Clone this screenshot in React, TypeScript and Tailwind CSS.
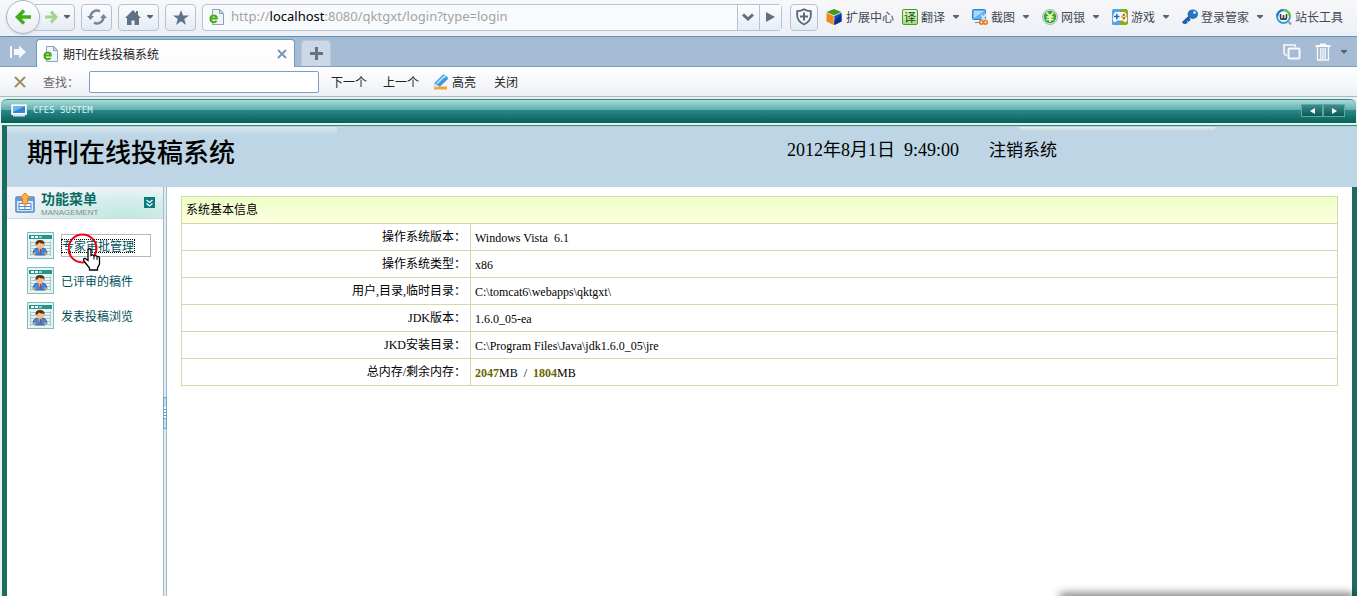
import type { ReactNode } from "react";

type Tool = {
  label: string;
  icon: ReactNode;
  menu: boolean;
};

type InfoRow = {
  label: string;
  value: ReactNode;
};

function Caret() {
  return (
    <svg width="6" height="4" viewBox="0 0 6 4" className="shrink-0" aria-hidden="true">
      <path d="M0 0h6v1L3.500 3.500h-1L0 1z" fill="#5a6470" />
    </svg>
  );
}

function PageIcon() {
  return (
    <svg width="16" height="16" viewBox="0 0 16 16" className="shrink-0" aria-hidden="true">
      <path d="M3.500.500h7.500l3.500 4v11h-11z" fill="#eef4fa" stroke="#8ba3bb" />
      <path d="M10.500.500v4h4z" fill="#c9d9e8" stroke="#8ba3bb" />
      <circle cx="4.800" cy="9.500" r="4.600" fill="#f4fbf0" />
      <path d="M2 9.500h5.800C7.800 5.200 1.500 5.500 1.500 9.700c0 4 4.500 4.300 6 2" fill="none" stroke="#43ac17" strokeWidth="2" />
    </svg>
  );
}

function CubeIcon() {
  return (
    <svg width="16" height="16" viewBox="0 0 16 16" aria-hidden="true">
      <path d="M8 0l7.500 3L8 6.300.500 3z" fill="#3d9b16" />
      <path d="M.500 3.800L7.700 7v9L.500 12.500z" fill="#f08a1c" />
      <path d="M15.500 3.800L8.300 7v9l7.200-3.500z" fill="#1550c0" />
      <path d="M8.300 12l7.200-7v7.500L8.300 16z" fill="#0c2f8c" />
    </svg>
  );
}

function TranslateIcon() {
  return (
    <span className="flex size-4 items-center justify-center rounded-xs border border-[#4b9b28] bg-linear-to-b from-[#e6f8d8] to-[#a6dc84] text-xs leading-none text-[#1e4a0c]">
      译
    </span>
  );
}

function ShotIcon() {
  return (
    <svg width="16" height="16" viewBox="0 0 16 16" aria-hidden="true">
      <rect x=".5" y=".5" width="13" height="10" rx="1" fill="#5db4f0" stroke="#3b7fc4" />
      <path d="M2 2h10L2 9z" fill="#a9dcfb" />
      <path d="M3 13h5v1H3z" fill="#6b8fb5" />
      <path d="M14.500 4.500L9.500 12M9.500 6l4 6" stroke="#dbe5ee" strokeWidth="1.800" />
      <circle cx="9.500" cy="13.300" r="1.800" fill="#fff" stroke="#e8771a" strokeWidth="1.600" />
      <circle cx="13.500" cy="13.300" r="1.800" fill="#fff" stroke="#e8771a" strokeWidth="1.600" />
    </svg>
  );
}

function BankIcon() {
  return (
    <svg width="16" height="16" viewBox="0 0 16 16" aria-hidden="true">
      <circle cx="8" cy="8" r="7.500" fill="#d3ecf3" stroke="#8fbccb" />
      <circle cx="8" cy="8" r="6.200" fill="#41a51d" />
      <path d="M4.500 3.500L8 7 11.500 3.500M8 7v6M4.500 8h7M4.500 10.500h7" fill="none" stroke="#f3ffd9" strokeWidth="1.600" />
    </svg>
  );
}

function GameIcon() {
  return (
    <svg width="16" height="16" viewBox="0 0 16 16" aria-hidden="true">
      <rect width="9" height="16" rx="1.500" fill="#57a5e3" />
      <path d="M8 0h6.500L16 1.500v13L14.500 16H8z" fill="#86ad1d" />
      <path d="M3.500 3h9Q15.500 5 15 12q-2 2.500-4-.500H5q-2 3-4 .500Q.500 5 3.500 3z" fill="#f6fbff" />
      <path d="M2 7.500h5.500M4.800 4.800v5.400" stroke="#2568b1" strokeWidth="1.500" />
      <path d="M9 6.500h2v2H9zM12.500 6.500h2v2h-2z" fill="#f2a51d" />
      <path d="M10.800 4.800h2v2h-2zM10.800 8.200h2v2h-2z" fill="#cf3720" />
    </svg>
  );
}

function KeyIcon() {
  return (
    <svg width="16" height="16" viewBox="0 0 16 16" aria-hidden="true">
      <path d="M9 6.500L1 14.200M3 12l1.500 2.500M5.500 9.500l2 2.500" stroke="#1d62a6" strokeWidth="3" />
      <ellipse cx="10.800" cy="5.200" rx="5.200" ry="4.800" fill="#2674bd" />
      <circle cx="12.500" cy="3.600" r="1.300" fill="#f4f6fa" />
    </svg>
  );
}

function WebmasterIcon() {
  return (
    <svg width="16" height="16" viewBox="0 0 16 16" aria-hidden="true">
      <circle cx="7.500" cy="7.500" r="6.400" fill="#fff" stroke="#22a7d4" strokeWidth="2" />
      <path d="M7.500 1.100a6.400 6.400 0 0 0-6.400 6.400" fill="none" stroke="#2c6fd2" strokeWidth="2" />
      <path d="M13.900 7.500A6.400 6.400 0 0 0 7.500 1.100" fill="none" stroke="#5fc72a" strokeWidth="2" />
      <path d="M4.500 5v3.200q0 2 1.500 2t1.500-2V6v2.200q0 2 1.500 2t1.500-2V5" fill="none" stroke="#333a44" strokeWidth="1.600" />
      <path d="M11.500 11.500L15 15.500" stroke="#949ca6" strokeWidth="2" />
    </svg>
  );
}

const tools: Tool[] = [
  { label: "翻译", icon: <TranslateIcon />, menu: true },
  { label: "截图", icon: <ShotIcon />, menu: true },
  { label: "网银", icon: <BankIcon />, menu: true },
  { label: "游戏", icon: <GameIcon />, menu: true },
  { label: "登录管家", icon: <KeyIcon />, menu: true },
  { label: "站长工具", icon: <WebmasterIcon />, menu: false },
];

const rows: InfoRow[] = [
  { label: "操作系统版本：", value: "Windows Vista  6.1" },
  { label: "操作系统类型：", value: "x86" },
  { label: "用户,目录,临时目录：", value: "C:\\tomcat6\\webapps\\qktgxt\\" },
  { label: "JDK版本：", value: "1.6.0_05-ea" },
  { label: "JKD安装目录：", value: "C:\\Program Files\\Java\\jdk1.6.0_05\\jre" },
  {
    label: "总内存/剩余内存：",
    value: (
      <>
        <b className="text-[#666600]">2047</b>MB{"  /  "}
        <b className="text-[#666600]">1804</b>MB
      </>
    ),
  },
];

const menuItems = ["专家审批管理", "已评审的稿件", "发表投稿浏览"];

const toolButton =
  "flex h-[27px] items-center justify-center rounded-sm border border-[#b3c3d3] bg-linear-to-b from-[#fbfcfe] to-[#e6ebf3]";

function Toolbar() {
  return (
    <header className="flex h-9 items-center bg-linear-to-b from-[#f8f8fa] to-[#eceff6] pr-3.5 pb-0.5 pl-1.5 text-xs text-[#444a52]">
      <button aria-label="后退" className="z-10 flex size-[34px] shrink-0 items-center justify-center rounded-full border border-[#a9b5c4] bg-linear-to-b from-white to-[#e9ecf3] shadow-sm">
        <svg width="16" height="16" viewBox="0 0 16 16" aria-hidden="true">
          <path d="M9 1.500L2.500 8 9 14.500M3 8h13" fill="none" stroke="#3fae1c" strokeWidth="3.500" />
        </svg>
      </button>
      <button aria-label="前进" className={`${toolButton} -ml-2 w-[43px] gap-1.5 pl-2`}>
        <svg width="13" height="14" viewBox="0 0 13 14" aria-hidden="true">
          <path d="M6 1.500L11 7l-5 5.500M0 7h11" fill="none" stroke="#9fd68e" strokeWidth="3" />
        </svg>
        <Caret />
      </button>
      <button aria-label="刷新" className={`${toolButton} ml-1.5 w-[31px]`}>
        <svg width="20" height="18" viewBox="0 0 20 18" aria-hidden="true">
          <path d="M3.500 9A6.500 6.500 0 0 1 13 3.300M16.500 9A6.500 6.500 0 0 1 7 14.700" fill="none" stroke="#76879b" strokeWidth="2.500" />
          <path d="M0 8h7l-3.500 4zM20 10h-7l3.500-4z" fill="#76879b" />
        </svg>
      </button>
      <button aria-label="主页" className={`${toolButton} ml-1.5 w-[41px] gap-1.5`}>
        <svg width="16" height="15" viewBox="0 0 16 15" aria-hidden="true">
          <path d="M8 0l3 3V1h2v4l3 3h-2v7H9.500v-4.500h-3V15H2V8H0z" fill="#5f7187" />
        </svg>
        <Caret />
      </button>
      <button aria-label="收藏" className={`${toolButton} ml-1.5 w-[31px]`}>
        <svg width="16" height="15" viewBox="0 0 16 15" aria-hidden="true">
          <path d="M8 0l2 5.500h6l-4.800 3.400L13 15 8 11.300 3 15l1.800-6.100L0 5.500h6z" fill="#5f7187" />
        </svg>
      </button>

      <div className="ml-1.5 flex h-[27px] min-w-0 flex-1 items-center rounded-sm border border-[#b3c3cf] bg-[#f9fafe]">
        <span className="pl-1.5">
          <PageIcon />
        </span>
        <a
          href="#"
          className="min-w-0 flex-1 truncate pl-1.5 font-['Noto_Sans',sans-serif] text-[13px] text-[#a3a3a3]"
        >
          http://<span className="text-black">localhost</span>:8080/qktgxt/login?type=login
        </a>
        <button aria-label="历史" className="flex h-full w-[22px] items-center justify-center border-l border-[#b3c3cf] bg-linear-to-b from-[#fbfcfe] to-[#e9edf4]">
          <svg width="12" height="8" viewBox="0 0 12 8" aria-hidden="true">
            <path d="M1 1.500l5 4.500 5-4.500" fill="none" stroke="#5f6f82" strokeWidth="3" />
          </svg>
        </button>
        <button aria-label="转到" className="flex h-full w-[22px] items-center justify-center border-l border-[#b3c3cf] bg-linear-to-b from-[#fbfcfe] to-[#e9edf4]">
          <svg width="9" height="10" viewBox="0 0 9 10" aria-hidden="true">
            <path d="M0 0l9 5-9 5z" fill="#5f7187" />
          </svg>
        </button>
      </div>

      <button aria-label="安全" className={`${toolButton} ml-2 w-7`}>
        <svg width="18" height="18" viewBox="0 0 18 18" aria-hidden="true">
          <path d="M9 1.300c2 1.400 4 1.800 6.800 1.800v4.400c0 4-2.800 7-6.800 9-4-2-6.800-5-6.800-9V3.100C5 3.100 7 2.700 9 1.300z" fill="#f5f7fa" stroke="#56677b" strokeWidth="1.800" />
          <path d="M9 4.500v8M5 8.500h8" stroke="#56677b" strokeWidth="2" />
        </svg>
      </button>
      <button className="mr-2 ml-2 flex shrink-0 items-center gap-1">
        <CubeIcon />
        扩展中心
      </button>
      <nav className="flex shrink-0 items-center gap-[13px]">
        {tools.map((tool) => (
          <button key={tool.label} className="flex items-center">
            {tool.icon}
            <span className="ml-[3px]">{tool.label}</span>
            {tool.menu && (
              <span className="ml-2">
                <Caret />
              </span>
            )}
          </button>
        ))}
      </nav>
    </header>
  );
}

function TabStrip() {
  return (
    <div className="flex h-[31px] items-end border-y border-t-[#6391b5] border-b-[#7d9fbe] bg-[#a6bbd4]">
      <button aria-label="侧栏" className="flex h-full w-9 items-center justify-center">
        <svg width="17" height="14" viewBox="0 0 17 14" aria-hidden="true">
          <path d="M1 1v12" stroke="#f5f8fc" strokeWidth="2" />
          <path d="M4 4h5V.500L16 7l-7 6.500V10H4z" fill="#f5f8fc" />
        </svg>
      </button>
      <div className="-mb-px flex h-7 w-[259px] items-center rounded-t-sm border border-b-0 border-[#6d9abf] bg-linear-to-b from-white to-[#fcfcfe] pr-[7px] pl-1.5 text-xs text-[#222]">
        <PageIcon />
        <span className="ml-1 flex-1">期刊在线投稿系统</span>
        <button aria-label="关闭标签">
          <svg width="10" height="10" viewBox="0 0 10 10" aria-hidden="true">
            <path d="M1 1l8 8M9 1L1 9" stroke="#7c96b2" strokeWidth="2" />
          </svg>
        </button>
      </div>
      <button aria-label="新标签" className="ml-1.5 flex h-[26px] w-[30px] items-center justify-center rounded-t-sm border border-b-0 border-[#b9c9dd] bg-[#ccd7e7]">
        <svg width="13" height="13" viewBox="0 0 13 13" aria-hidden="true">
          <path d="M6.500 0v13M0 6.500h13" stroke="#67727f" strokeWidth="3" />
        </svg>
      </button>
      <div className="ml-auto flex h-full items-center pr-2.5">
        <button aria-label="恢复">
          <svg width="18" height="16" viewBox="0 0 18 16" aria-hidden="true">
            <path d="M4 11H2.500L1 9.500V1h11v2" fill="none" stroke="#f8fafc" strokeWidth="1.600" />
            <rect x="5.500" y="4.500" width="11" height="10" rx="1" fill="none" stroke="#f8fafc" strokeWidth="2" />
          </svg>
        </button>
        <button aria-label="清空" className="ml-3.5 flex items-center gap-2.5">
          <svg width="16" height="18" viewBox="0 0 16 18" aria-hidden="true">
            <path d="M.500 3h15M5 1.500h6" stroke="#f8fafc" strokeWidth="2" />
            <path d="M2.500 4v13h11V4M5.800 5v11M8 5v11M10.200 5v11" fill="none" stroke="#f8fafc" strokeWidth="1.300" />
          </svg>
          <Caret />
        </button>
      </div>
    </div>
  );
}

function FindBar() {
  return (
    <form className="flex h-[30px] items-center border-b border-[#aab8c8] bg-linear-to-b from-white to-[#edf0f5] pl-3.5 text-xs text-[#222]">
      <button type="button" aria-label="关闭查找">
        <svg width="12" height="12" viewBox="0 0 12 12" aria-hidden="true">
          <path d="M1 1l10 10M11 1L1 11" stroke="#a08f60" strokeWidth="2" />
        </svg>
      </button>
      <label htmlFor="find" className="ml-[17px] text-[#666]">
        查找：
      </label>
      <input id="find" className="ml-2.5 h-[22px] w-[230px] rounded-xs border border-[#7ba0c4] bg-white px-1 outline-none" />
      <button type="button" className="ml-3">下一个</button>
      <button type="button" className="ml-4">上一个</button>
      <button type="button" className="ml-3.5 flex items-center gap-[3px]">
        <svg width="16" height="16" viewBox="0 0 16 16" aria-hidden="true">
          <path d="M1 12.500h13v3H1z" fill="#f3a233" />
          <path d="M1.500 9L9 1.500q1-1.500 2.500-.500l3 2q1 1 0 2.500L7 12.500l-5.500.500z" fill="#3a98dc" />
          <path d="M4 9.500l7-7 1.500 1" fill="none" stroke="#a8dcfa" strokeWidth="2" />
          <path d="M1.500 9L6.500 12.500l-5 1z" fill="#d9e6f0" />
        </svg>
        高亮
      </button>
      <button type="button" className="ml-[18px]">关闭</button>
    </form>
  );
}

function FrameBar() {
  const nav =
    "flex h-[13px] w-[22px] items-center justify-center border border-[#5fa9a2] bg-linear-to-b from-[#3a8f8b] to-[#0b5a57]";

  return (
    <div className="mx-px mt-0.5 flex h-6 items-center rounded-t-md border-t border-[#3f8576] bg-[linear-gradient(#a8dbda_0%,#62adb0_42%,#2c8a89_43%,#06605a_100%)] pr-[11px] pb-0.5 pl-2.5">
      <svg width="16" height="13" viewBox="0 0 16 13" aria-hidden="true">
        <rect x=".5" y=".5" width="15" height="10" fill="#fff" stroke="#dce4ea" />
        <rect x="2" y="2" width="12" height="7" fill="#2f86d2" />
        <path d="M2 2h12L2 8z" fill="#6db7ef" />
        <path d="M2 11.500h12" stroke="#d9e6ea" strokeWidth="2" />
      </svg>
      <span className="ml-1.5 flex-1 font-['DejaVu_Sans_Mono',monospace] text-[9px] leading-none text-[#dff5f3]">CFES SUSTEM</span>
      <button aria-label="上一页" className={nav}>
        <svg width="5" height="6" viewBox="0 0 5 6" aria-hidden="true">
          <path d="M5 0v6L0 3z" fill="#fff" />
        </svg>
      </button>
      <button aria-label="下一页" className={nav}>
        <svg width="5" height="6" viewBox="0 0 5 6" aria-hidden="true">
          <path d="M0 0v6l5-3z" fill="#fff" />
        </svg>
      </button>
    </div>
  );
}

function MemberIcon() {
  return (
    <svg width="27" height="27" viewBox="0 0 27 27" className="shrink-0" aria-hidden="true">
      <rect x=".5" y=".5" width="26" height="26" fill="#e8f3f3" stroke="#82bcb8" />
      <path d="M2 3h23v4H2z" fill="#1f968f" />
      <path d="M4 4h3v2H4zM8 4h3v2H8z" fill="#fff" />
      <path d="M12 4h3v2h-3z" fill="#8fd0cb" />
      <path d="M3 10.500h21M3 13.500h21M3 16.500h21M3 19.500h21M3 22.500h21M3.500 9v15M23.500 9v15" stroke="#a7c9cb" />
      <path d="M6 21q1-5 5-5h4q4 0 5 5l-1.500 2h-11z" fill="#3c8be0" stroke="#2d5ea5" />
      <path d="M11.500 16.500h3L13 21z" fill="#fff" />
      <path d="M12.500 17h1.500l.500 4-1 1-1-1z" fill="#d83225" />
      <circle cx="13" cy="13" r="3.800" fill="#f8bd85" />
      <path d="M8.500 13q-.500-5 4.500-5t4.500 5l-1.500-1.500q-3 0-4-1-1 2-3.500 2.500z" fill="#5b2e1a" />
      <path d="M6 20.500h2.500V23H7zM17.500 20.500H20L19 23h-1.500z" fill="#f4a25a" />
    </svg>
  );
}

function Pointer() {
  return (
    <svg width="42" height="40" viewBox="0 0 42 40" className="pointer-events-none absolute -top-0.5 left-1.5" aria-hidden="true">
      <circle cx="14.500" cy="15.500" r="14" fill="none" stroke="#f00010" strokeWidth="2" />
      <path
        d="M20 16.500q1.500-1.500 3 0v6q2-1.500 3 .500 2-1 3 .500 2-.500 2.500 1.500v6l-2 4v2h-8v-2l-4-5-2-3q0-2 2-1.500l2.500 2z"
        fill="#fff"
        stroke="#000"
        strokeWidth="1.300"
      />
      <path d="M26 23v3.500M29 24v3" stroke="#000" />
    </svg>
  );
}

function Sidebar() {
  return (
    <aside className="w-[156px] shrink-0 bg-white">
      <div className="flex h-8 items-center border-b border-[#d3d9e6] bg-[radial-gradient(ellipse_at_75%_100%,#bfe8e1_0%,#d8eeec_45%,#f3f4f7_75%)] px-2">
        <svg width="20" height="22" viewBox="0 0 20 22" aria-hidden="true">
          <rect x="1" y="5" width="18" height="15" rx="1" fill="#dbeafa" stroke="#4b83ce" strokeWidth="1.500" />
          <path d="M1 6h18v3H1z" fill="#5f9be0" />
          <path d="M4 11.500h12v6H4zM10 11.500v6M4 14.500h12" fill="#fff" stroke="#4b83ce" />
          <path d="M10 1l5.500 5H12.500v6h-5V6H4.500z" fill="#fbb54c" stroke="#d9811f" />
        </svg>
        <div className="ml-1.5 flex-1">
          <h2 className="text-sm leading-5 font-bold text-[#0a6b66]">功能菜单</h2>
          <p className="font-['Liberation_Sans',sans-serif] text-[8px] leading-[9px] text-[#858b90]">MANAGEMENT</p>
        </div>
        <button aria-label="收起" className="flex size-[11px] items-center justify-center bg-[#087a80]">
          <svg width="7" height="8" viewBox="0 0 7 8" aria-hidden="true">
            <path d="M.500 1l3 2.500 3-2.500M.500 4.500l3 2.500 3-2.500" fill="none" stroke="#fff" strokeWidth="1.300" />
          </svg>
        </button>
      </div>
      <ul className="flex flex-col gap-2 pt-[13px] pr-3 pl-5 text-xs">
        {menuItems.map((item, i) => (
          <li key={item} className="flex items-center gap-[7px]">
            <MemberIcon />
            {i === 0 ? (
              <a href="#" className="relative flex h-[23px] flex-1 items-center border border-[#aeb9cc] text-[#00505a]">
                <span className="leading-3 outline-1 outline-black outline-dotted">{item}</span>
                <Pointer />
              </a>
            ) : (
              <a href="#" className="text-[#00505a]">
                {item}
              </a>
            )}
          </li>
        ))}
      </ul>
    </aside>
  );
}

function Splitter() {
  return (
    <div className="flex w-1 shrink-0 items-center border-x border-[#a3bccd] bg-[#dcedf8]">
      <button
        aria-label="调整宽度"
        className="-mx-px mt-[42px] flex h-8 w-1 shrink-0 items-center border border-[#69a7c4] bg-[#bfe2f3]"
      >
        <span className="h-3 w-full bg-[repeating-linear-gradient(#ffffff_0_2px,#7d98a8_2px_3px)]" />
      </button>
    </div>
  );
}

function SystemInfo() {
  return (
    <table className="w-full table-fixed border-collapse font-['Liberation_Serif','Noto_Sans_CJK_SC',serif] text-xs text-black">
      <colgroup>
        <col className="w-1/4" />
        <col />
      </colgroup>
      <thead>
        <tr className="h-[27px]">
          <th colSpan={2} className="border border-[#d0dbaa] bg-linear-to-b from-[#ecffc8] to-[#fffee0] px-1 text-left font-normal">
            系统基本信息
          </th>
        </tr>
      </thead>
      <tbody>
        {rows.map((row) => (
          <tr key={row.label} className="h-[27px]">
            <th scope="row" className="border border-[#d0dbaa] px-1 text-right font-normal">
              {row.label}
            </th>
            <td className="border border-[#d0dbaa] px-1 pt-0.5 whitespace-pre">{row.value}</td>
          </tr>
        ))}
      </tbody>
    </table>
  );
}

export default function App() {
  return (
    <div className="relative flex min-h-screen flex-col overflow-hidden bg-[#e6f1f0] font-['Noto_Sans_CJK_SC',sans-serif]">
      <Toolbar />
      <TabStrip />
      <FindBar />
      <FrameBar />

      <div className="mt-0.5 ml-0.5 flex flex-1 flex-col border-t border-l-[5px] border-t-[#3f8576] border-l-[#1d6b61] bg-white">
        <div className="relative flex h-[61px] items-start border-t border-[#a9d6d8] bg-[#bdd5e5] pt-1.5 pr-[300px] pl-5 text-black">
          <div className="absolute top-0 left-0 h-2 w-[330px] bg-linear-to-b from-[#d6e6ee] to-[#bdd5e5]" />
          <div className="absolute top-0 right-[142px] h-2 w-[196px] bg-linear-to-b from-[#dfeff3] via-[#c3d3df] to-[#bdd5e5]" />
          <h1 className="relative flex-1 text-[26px] leading-9 font-medium">期刊在线投稿系统</h1>
          <div className="flex items-baseline pt-1">
            <p className="font-['Liberation_Serif','Noto_Sans_CJK_SC',serif] text-lg leading-6 whitespace-pre">2012年8月1日  9:49:00</p>
            <a href="#" className="ml-[30px] text-[17px] leading-6">
              注销系统
            </a>
          </div>
        </div>
        <div className="flex flex-1 border-r-[5px] border-[#1d6b61]">
          <Sidebar />
          <Splitter />
          <main className="flex-1 px-3.5 pt-[9px]">
            <SystemInfo />
          </main>
        </div>
      </div>

      <div className="absolute right-1.5 -bottom-1 h-1 w-72 shadow-[0_0_8px_3px_rgba(0,0,0,0.5)]" />
    </div>
  );
}
